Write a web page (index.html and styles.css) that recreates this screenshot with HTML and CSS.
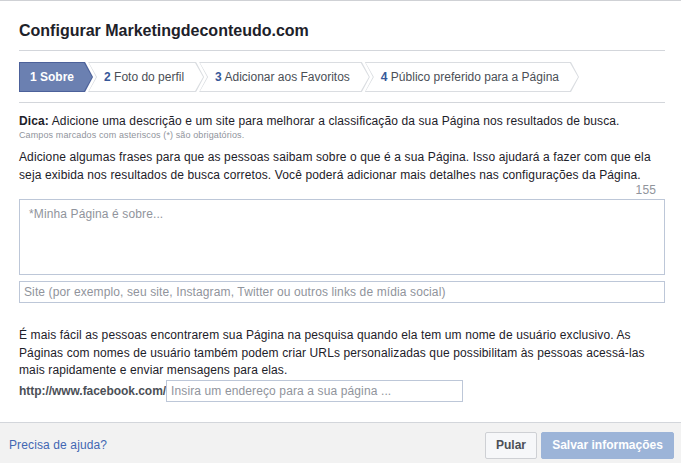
FILE: index.html
```html
<!DOCTYPE html>
<html lang="pt-BR">
<head>
    <meta charset="UTF-8">
    <title>Configurar Marketingdeconteudo.com</title>
    <link rel="stylesheet" href="styles.css">
</head>
<body>
    <div class="dialog">
        <div class="dialog-body">
            <div class="dialog-title">Configurar Marketingdeconteudo.com</div>

            <div class="steps">
                <div class="step step-first active"><div class="step-inner"><b>1</b> Sobre</div></div>
                <div class="step"><div class="step-inner"><b>2</b> Foto do perfil</div></div>
                <div class="step"><div class="step-inner"><b>3</b> Adicionar aos Favoritos</div></div>
                <div class="step"><div class="step-inner"><b>4</b> Público preferido para a Página</div></div>
            </div>

            <div class="tip"><b>Dica:</b> Adicione uma descrição e um site para melhorar a classificação da sua Página nos resultados de busca.</div>
            <div class="required-note">Campos marcados com asteriscos (*) são obrigatórios.</div>

            <p class="text">Adicione algumas frases para que as pessoas saibam sobre o que é a sua Página. Isso ajudará a fazer com que ela seja exibida nos resultados de busca corretos. Você poderá adicionar mais detalhes nas configurações da Página.</p>
            <div class="counter">155</div>
            <textarea class="form-area" placeholder="*Minha Página é sobre..."></textarea>
            <input type="text" class="form-input" placeholder="Site (por exemplo, seu site, Instagram, Twitter ou outros links de mídia social)">

            <p class="text text-username">É mais fácil as pessoas encontrarem sua Página na pesquisa quando ela tem um nome de usuário exclusivo. As Páginas com nomes de usuário também podem criar URLs personalizadas que possibilitam às pessoas acessá-las mais rapidamente e enviar mensagens para elas.</p>
            <div class="url-row">
                <span class="url-prefix">http://www.facebook.com/</span>
                <input type="text" class="form-input url-input" placeholder="Insira um endereço para a sua página ...">
            </div>
        </div>

        <div class="dialog-footer">
            <a href="#" class="help-link">Precisa de ajuda?</a>
            <div class="footer-actions">
                <button class="btn btn-skip">Pular</button>
                <button class="btn btn-save" disabled>Salvar informações</button>
            </div>
        </div>
    </div>
</body>
</html>
```

FILE: styles.css
```css
body {
    margin: 0;
    background: #fff;
    font-family: "Liberation Sans", Arial, sans-serif;
    font-size: 12px;
    letter-spacing: 0.12px;
    color: #1d2129;
}

.dialog {
    border-top: 1px solid #cfd1d5;
    min-height: 462px;
    display: flex;
    flex-direction: column;
    box-sizing: border-box;
}

.dialog-body {
    padding: 0 16px 20px 19px;
    flex: 1;
}

.dialog-title {
    font-size: 16px;
    font-weight: bold;
    line-height: 20px;
    letter-spacing: 0;
    padding: 20px 0 9px;
    border-bottom: 1px solid #d3d6db;
}

/* Steps bar */
.steps {
    display: flex;
    margin: 11px 0 10px;
    padding-bottom: 10px;
    border-bottom: 1px solid #d3d6db;
}

.step {
    height: 30px;
    background: #dadde1;
    margin-left: -5px;
    clip-path: polygon(0 0, calc(100% - 8px) 0, 100% 50%, calc(100% - 8px) 100%, 0 100%, 8px 50%);
}

.step-inner {
    height: 28px;
    margin: 1px;
    padding: 0 19px 0 15px;
    line-height: 28px;
    background: #fff;
    color: #4b4f56;
    letter-spacing: 0;
    white-space: nowrap;
    clip-path: polygon(0 0, calc(100% - 8px) 0, 100% 50%, calc(100% - 8px) 100%, 0 100%, 8px 50%);
}

.step-inner b {
    color: #365899;
}

.step-first {
    margin-left: 0;
    clip-path: polygon(0 0, calc(100% - 8px) 0, 100% 50%, calc(100% - 8px) 100%, 0 100%);
}

.step-first .step-inner {
    padding: 0 18px 0 10px;
    clip-path: polygon(0 0, calc(100% - 8px) 0, 100% 50%, calc(100% - 8px) 100%, 0 100%);
}

.step.active {
    background: #4c619a;
}

.step.active .step-inner {
    background: #6b80b1;
    color: #fff;
    font-weight: bold;
}

.step.active .step-inner b {
    color: #fff;
}

/* Text */
.tip {
    line-height: 16px;
}

.required-note {
    font-size: 9px;
    line-height: 12px;
    color: #90949c;
}

.text {
    margin: 8px 0 0;
    line-height: 17.5px;
}

.counter {
    text-align: right;
    color: #90949c;
    line-height: 12px;
    padding-right: 9px;
}

/* Inputs */
.form-area, .form-input {
    display: block;
    width: 100%;
    box-sizing: border-box;
    border: 1px solid #bdc7d8;
    font-family: "Liberation Sans", Arial, sans-serif;
    font-size: 12px;
    letter-spacing: 0.12px;
    color: #1d2129;
    outline: none;
}

.form-area {
    height: 76px;
    margin-top: 3px;
    padding: 7px 9px;
    resize: none;
}

.form-input {
    height: 22px;
    margin-top: 6px;
    padding: 0 4px;
}

.form-area::placeholder, .form-input::placeholder {
    color: #90949c;
}

.text-username {
    margin-top: 24px;
}

.url-row {
    display: flex;
    align-items: center;
}

.url-prefix {
    font-weight: bold;
    letter-spacing: -0.05px;
    color: #4b4f56;
}

.url-input {
    width: 297px;
    margin-top: 0;
}

/* Footer */
.dialog-footer {
    display: flex;
    justify-content: space-between;
    align-items: center;
    background: #f2f2f2;
    border-top: 1px solid #d3d6db;
    padding: 9px 7px 8px 9px;
}

.help-link {
    color: #4267b2;
    text-decoration: none;
}

.footer-actions {
    display: flex;
    gap: 4px;
}

.btn {
    height: 27px;
    font-family: "Liberation Sans", Arial, sans-serif;
    font-size: 12px;
    font-weight: bold;
    border-radius: 2px;
    cursor: pointer;
}

.btn-skip {
    width: 52px;
    background: #f6f7f9;
    border: 1px solid #ced0d4;
    color: #4b4f56;
}

.btn-save {
    width: 133px;
    background: #9cb4d8;
    border: 1px solid #9cb4d8;
    color: #fff;
    cursor: default;
}
```
